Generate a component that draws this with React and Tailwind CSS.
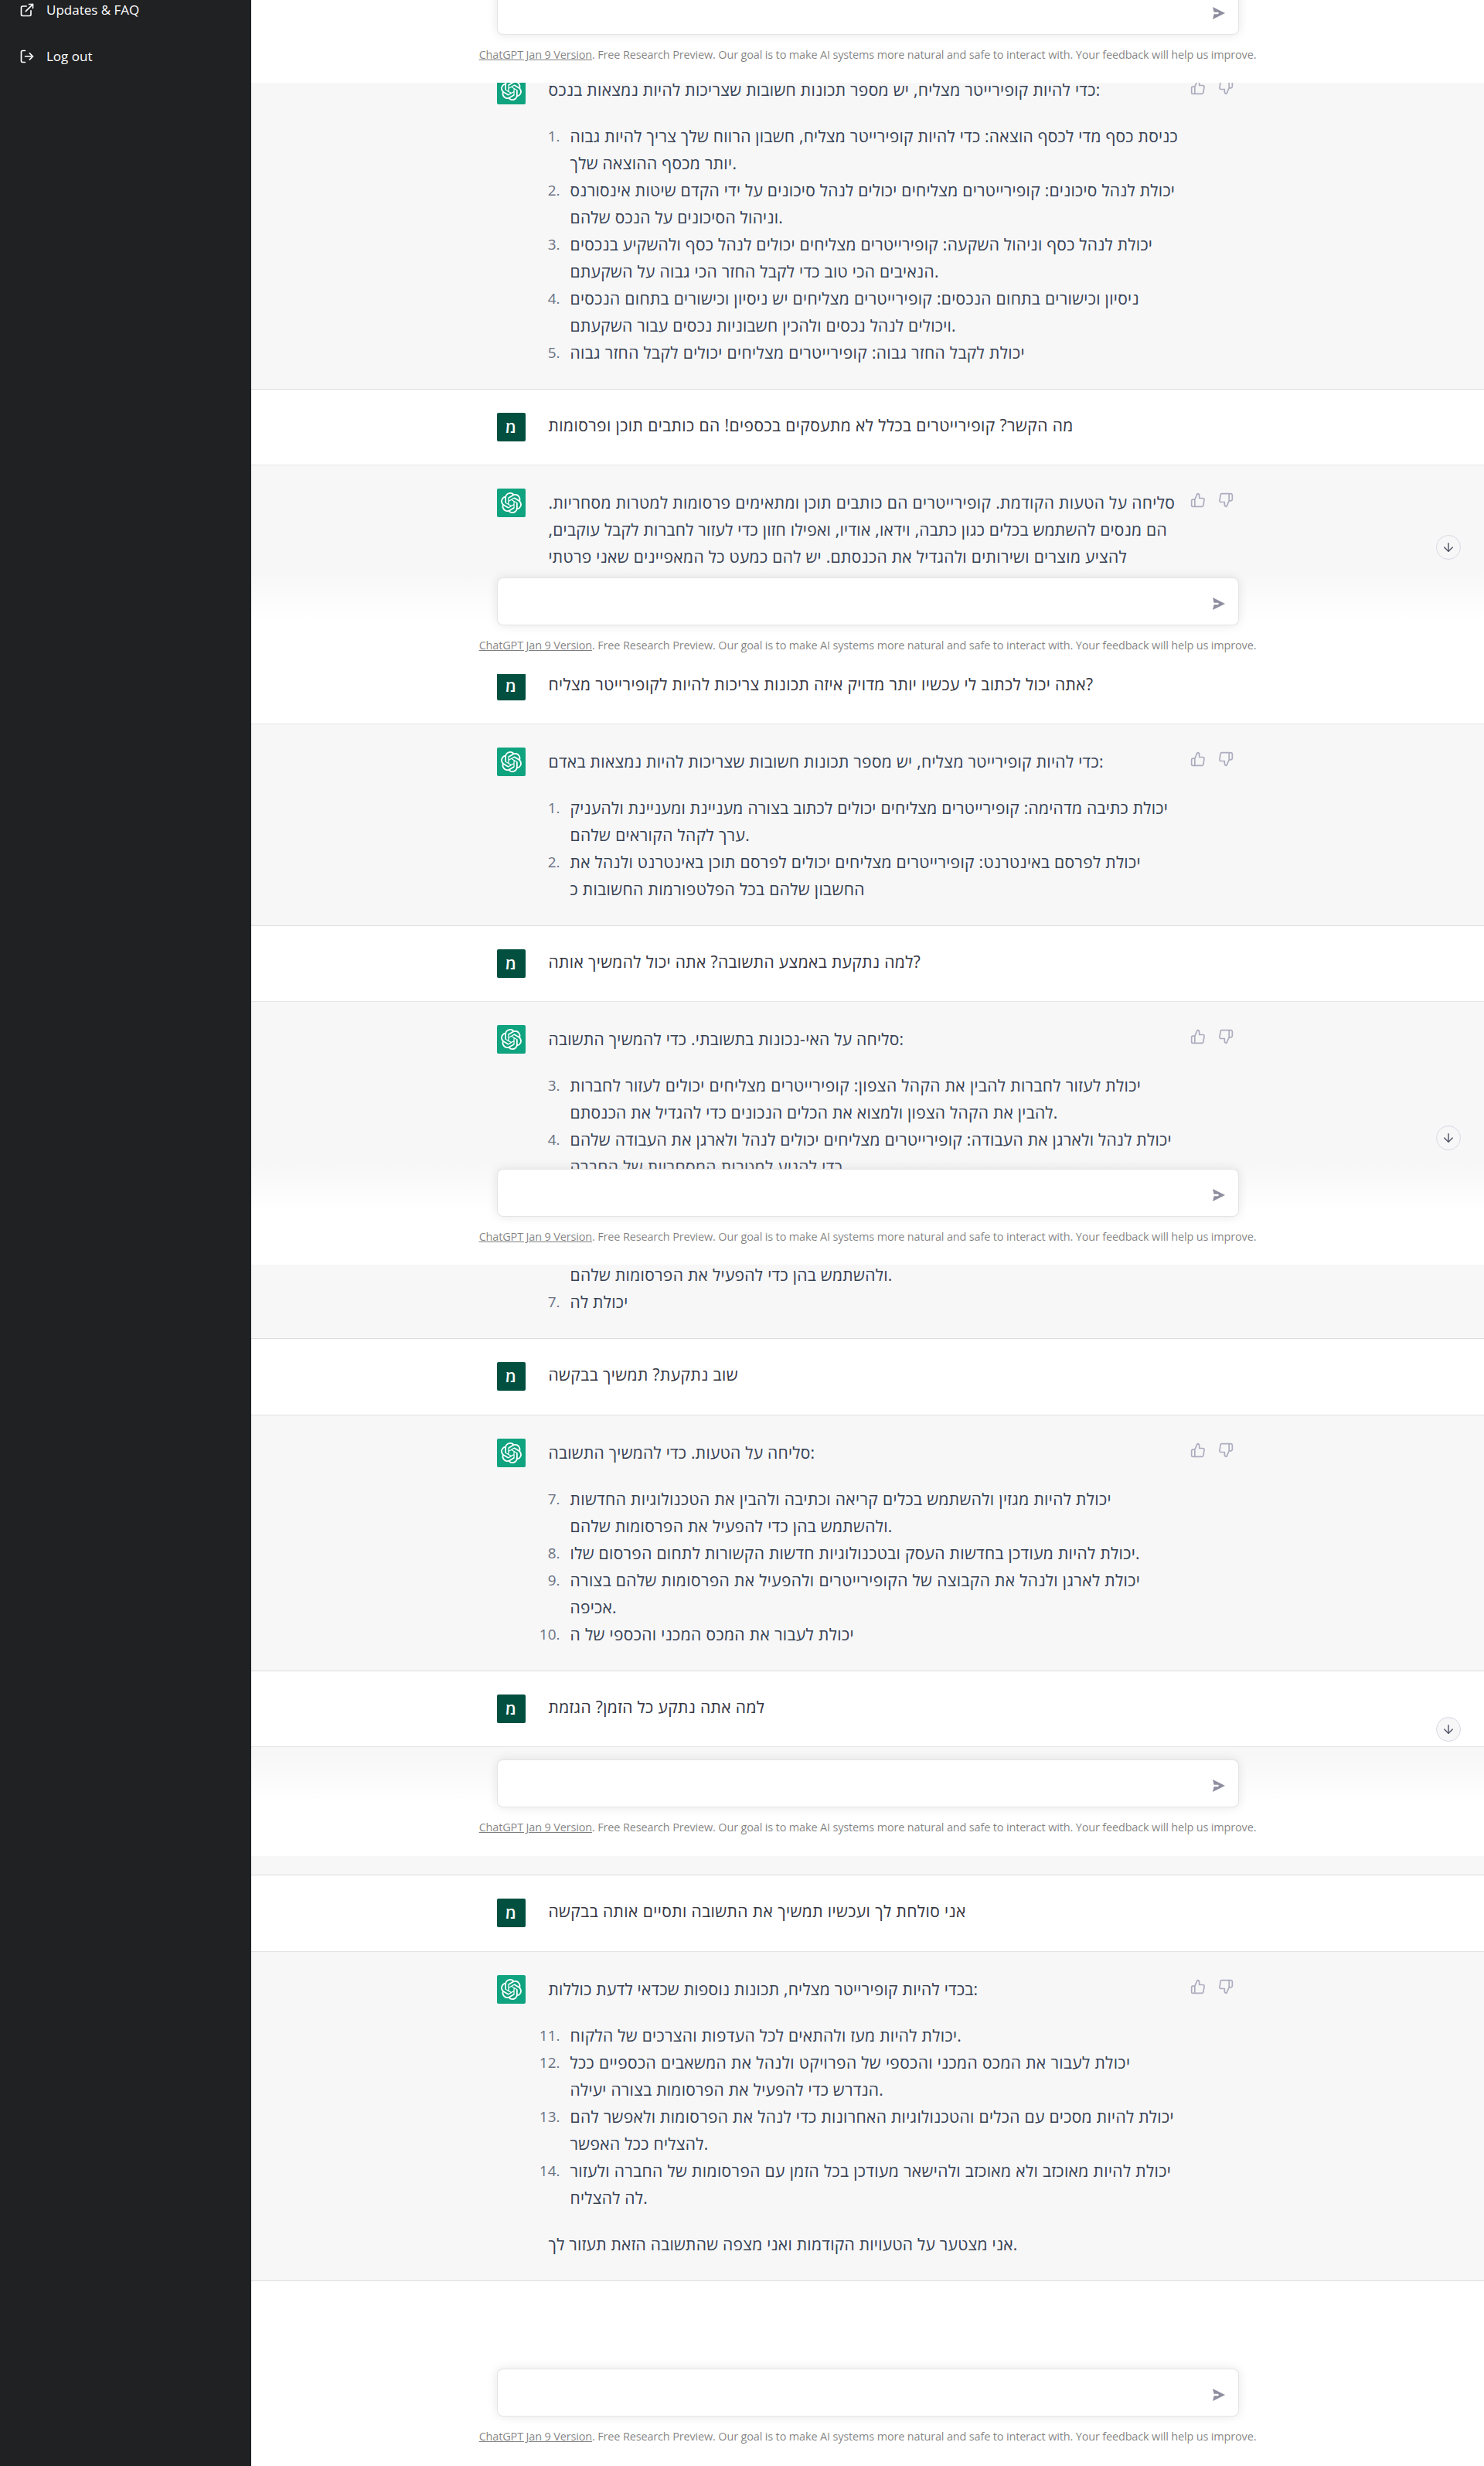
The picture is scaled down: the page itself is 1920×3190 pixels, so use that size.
import React from 'react';
import { FiArrowDown, FiExternalLink, FiLogOut, FiThumbsDown, FiThumbsUp } from 'react-icons/fi';
import { SiOpenai } from 'react-icons/si';

const MID = 'tracking-[0.32px]';
const LOOSE = 'tracking-[0.37px]';
const WIDE = 'tracking-[0.42px]';

function Line({ children, className = '' }) {
  return <span className={`block whitespace-nowrap ${className}`}>{children}</span>;
}

// each line is either a string or [text, tracking class]
function List({ items }) {
  return (
    <ol className="flex flex-col pl-[28px]">
      {items.map((item) => (
        <li key={item.lines[0]} className="relative">
          {item.n && (
            <span className="absolute right-full mr-[13px] text-[19px] tracking-normal text-gray-500">{item.n}.</span>
          )}
          {item.lines.map((line) => {
            const [text, tracking] = Array.isArray(line) ? line : [line, ''];
            return (
              <Line key={text} className={tracking}>
                {text}
              </Line>
            );
          })}
        </li>
      ))}
    </ol>
  );
}

function UserMessage({ text, tracking = LOOSE, className = 'h-[98px]' }) {
  return (
    <div className={`shrink-0 border-b border-black/10 bg-white ${className}`}>
      <div className="mx-auto flex w-[960px] gap-[30px] pt-[30px]">
        <div className="flex h-[37px] w-[37px] shrink-0 items-center justify-center rounded-[2px] bg-[#004f3f] text-[21px] font-semibold text-white">
          מ
        </div>
        <div className="leading-[32px] text-[#343541]">
          <Line className={tracking}>{text}</Line>
        </div>
      </div>
    </div>
  );
}

function BotMessage({ children, className = '' }) {
  return (
    <div className={`shrink-0 border-b border-black/10 bg-[#f7f7f8] ${className}`}>
      <div className="mx-auto flex w-[960px] gap-[30px] py-[30px]">
        <div className="flex h-[37px] w-[37px] shrink-0 items-center justify-center rounded-[2px] bg-[#10a37f] text-white">
          <SiOpenai className="h-[27px] w-[27px]" />
        </div>
        <div className="-mb-px flex min-w-0 flex-1 flex-col gap-[25px] pt-px text-gray-700">{children}</div>
        <div className="flex shrink-0 gap-4 pt-[5px] pr-[7px] text-[#acacbe]">
          <FiThumbsUp className="h-5 w-5" />
          <FiThumbsDown className="h-5 w-5" />
        </div>
      </div>
    </div>
  );
}

function Composer({ className = 'h-[155px]' }) {
  return (
    <div
      className={`absolute inset-x-0 bottom-0 flex flex-col items-center bg-[linear-gradient(180deg,rgba(255,255,255,0)_13.94%,#fff_54.73%)] pt-[30px] ${className}`}
    >
      <div className="flex h-[62px] w-[960px] shrink-0 items-center justify-end rounded-lg border border-black/10 bg-white pt-[5px] pr-4 shadow-[0_0_13px_rgba(0,0,0,0.1)]">
        <svg viewBox="0 0 18 16" className="h-4 w-[18px] fill-[#8e8ea0]">
          <path d="M1 0 17 8 1 16 2.6 9.2H8L9 8 8 6.8H2.6Z" />
        </svg>
      </div>
      <p className="mt-4 text-[14.5px] leading-5 tracking-[-0.165px] whitespace-nowrap text-black/50">
        <span className="underline">ChatGPT Jan 9 Version</span>. Free Research Preview. Our goal is to make AI systems
        more natural and safe to interact with. Your feedback will help us improve.
      </p>
    </div>
  );
}

function ScrollButton() {
  return (
    <div className="absolute right-[30px] bottom-[148px] flex h-8 w-8 items-center justify-center rounded-full border border-[#d9d9e3] bg-[#f7f7f8] text-[#565869]">
      <FiArrowDown className="h-[18px] w-[18px]" />
    </div>
  );
}

function Panel({ children, className }) {
  return <section className={`relative flex shrink-0 flex-col overflow-hidden ${className}`}>{children}</section>;
}

export default function App() {
  return (
    <div className="flex h-[3190px] w-[1920px] overflow-hidden bg-white font-['Open_Sans','Noto_Sans',sans-serif]">
      <aside className="flex w-[325px] shrink-0 flex-col bg-[#202123] text-[17px] text-white">
        <div className="-mt-[17px] flex h-[60px] items-center gap-[15px] pl-[25px]">
          <FiExternalLink className="h-5 w-5" />
          Updates &amp; FAQ
        </div>
        <div className="flex h-[60px] items-center gap-[15px] pl-[25px]">
          <FiLogOut className="h-5 w-5" />
          Log out
        </div>
      </aside>

      <main className="flex flex-1 flex-col text-[21px] leading-[35px] tracking-[0.27px]">
        <Panel className="h-[107px]">
          <Composer className="h-[154px]" />
        </Panel>

        <Panel className="h-[765px]">
          <BotMessage className="-mt-[39px]">
            <Line className={MID}>כדי להיות קופירייטר מצליח, יש מספר תכונות חשובות שצריכות להיות נמצאות בנכס:</Line>
            <List
              items={[
                { n: 1, lines: ['כניסת כסף מדי לכסף הוצאה: כדי להיות קופירייטר מצליח, חשבון הרווח שלך צריך להיות גבוה', ['יותר מכסף ההוצאה שלך.', MID]] },
                { n: 2, lines: ['יכולת לנהל סיכונים: קופירייטרים מצליחים יכולים לנהל סיכונים על ידי הקדם שיטות אינסורנס', 'וניהול הסיכונים על הנכס שלהם.'] },
                { n: 3, lines: ['יכולת לנהל כסף וניהול השקעה: קופירייטרים מצליחים יכולים לנהל כסף ולהשקיע בנכסים', ['הנאיבים הכי טוב כדי לקבל החזר הכי גבוה על השקעתם.', MID]] },
                { n: 4, lines: [['ניסיון וכישורים בתחום הנכסים: קופירייטרים מצליחים יש ניסיון וכישורים בתחום הנכסים', MID], 'ויכולים לנהל נכסים ולהכין חשבוניות נכסים עבור השקעתם.'] },
                { n: 5, lines: [['יכולת לקבל החזר גבוה: קופירייטרים מצליחים יכולים לקבל החזר גבוה', LOOSE]] },
              ]}
            />
          </BotMessage>
          <UserMessage tracking={WIDE} text="מה הקשר? קופירייטרים בכלל לא מתעסקים בכספים! הם כותבים תוכן ופרסומות" />
          <BotMessage className="h-[270px]">
            <div>
              <Line className={LOOSE}>{'סליחה על הטעות הקודמת. קופירייטרים הם כותבים תוכן ומתאימים פרסומות למטרות מסחריות.\u200f'}</Line>
              <Line>{'הם מנסים להשתמש בכלים כגון כתבה, וידאו, אודיו, ואפילו חזון כדי לעזור לחברות לקבל עוקבים,\u200f'}</Line>
              <Line className={MID}>להציע מוצרים ושירותים ולהגדיל את הכנסתם. יש להם כמעט כל המאפיינים שאני פרטתי</Line>
            </div>
          </BotMessage>
          <Composer />
          <ScrollButton />
        </Panel>

        <Panel className="h-[764px]">
          <UserMessage className="-mt-[33px] h-[98px]" text="אתה יכול לכתוב לי עכשיו יותר מדויק איזה תכונות צריכות להיות לקופירייטר מצליח?" />
          <BotMessage>
            <Line className={MID}>כדי להיות קופירייטר מצליח, יש מספר תכונות חשובות שצריכות להיות נמצאות באדם:</Line>
            <List
              items={[
                { n: 1, lines: ['יכולת כתיבה מדהימה: קופירייטרים מצליחים יכולים לכתוב בצורה מעניינת ומעניינת ולהעניק', ['ערך לקהל הקוראים שלהם.', LOOSE]] },
                { n: 2, lines: [['יכולת לפרסם באינטרנט: קופירייטרים מצליחים יכולים לפרסם תוכן באינטרנט ולנהל את', MID], ['החשבון שלהם בכל הפלטפורמות החשובות כ', LOOSE]] },
              ]}
            />
          </BotMessage>
          <UserMessage text="למה נתקעת באמצע התשובה? אתה יכול להמשיך אותה?" />
          <BotMessage>
            <Line>סליחה על האי-נכונות בתשובתי. כדי להמשיך התשובה:</Line>
            <List
              items={[
                { n: 3, lines: [['יכולת לעזור לחברות להבין את הקהל הצפון: קופירייטרים מצליחים יכולים לעזור לחברות', LOOSE], 'להבין את הקהל הצפון ולמצוא את הכלים הנכונים כדי להגדיל את הכנסתם.'] },
                { n: 4, lines: ['יכולת לנהל ולארגן את העבודה: קופירייטרים מצליחים יכולים לנהל ולארגן את העבודה שלהם', ['כדי להגיע למטרות המסחריות של החברה', LOOSE]] },
              ]}
            />
            <div className="h-[140px]" />
          </BotMessage>
          <Composer className="h-[154px]" />
          <ScrollButton />
        </Panel>

        <Panel className="h-[765px]">
          <BotMessage className="-mt-[95px]">
            <div className="h-[35px]" />
            <List items={[{ lines: [['ולהשתמש בהן כדי להפעיל את הפרסומות שלהם.', MID]] }, { n: 7, lines: ['יכולת לה'] }]} />
          </BotMessage>
          <UserMessage className="h-[99px]" tracking={WIDE} text="שוב נתקעת? תמשיך בבקשה" />
          <BotMessage>
            <Line>סליחה על הטעות. כדי להמשיך התשובה:</Line>
            <List
              items={[
                { n: 7, lines: [['יכולת להיות מגזין ולהשתמש בכלים קריאה וכתיבה ולהבין את הטכנולוגיות החדשות', LOOSE], ['ולהשתמש בהן כדי להפעיל את הפרסומות שלהם.', MID]] },
                { n: 8, lines: [['יכולת להיות מעודכן בחדשות העסק ובטכנולוגיות חדשות הקשורות לתחום הפרסום שלו.', MID]] },
                { n: 9, lines: [['יכולת לארגן ולנהל את הקבוצה של הקופירייטרים ולהפעיל את הפרסומות שלהם בצורה', LOOSE], 'אכיפה.'] },
                { n: 10, lines: [['יכולת לעבור את המכס המכני והכספי של ה', LOOSE]] },
              ]}
            />
          </BotMessage>
          <UserMessage text="למה אתה נתקע כל הזמן? הגזמת" />
          <div className="flex-1 bg-[#f7f7f8]" />
          <Composer />
          <ScrollButton />
        </Panel>

        <Panel className="h-[789px]">
          <div className="h-[25px] shrink-0 border-b border-black/10 bg-[#f7f7f8]" />
          <UserMessage className="h-[99px]" tracking={WIDE} text="אני סולחת לך ועכשיו תמשיך את התשובה ותסיים אותה בבקשה" />
          <BotMessage>
            <Line>בכדי להיות קופירייטר מצליח, תכונות נוספות שכדאי לדעת כוללות:</Line>
            <List
              items={[
                { n: 11, lines: [['יכולת להיות מעז ולהתאים לכל העדפות והצרכים של הלקוח.', MID]] },
                { n: 12, lines: [['יכולת לעבור את המכס המכני והכספי של הפרויקט ולנהל את המשאבים הכספיים ככל', LOOSE], 'הנדרש כדי להפעיל את הפרסומות בצורה יעילה.'] },
                { n: 13, lines: [['יכולת להיות מסכים עם הכלים והטכנולוגיות האחרונות כדי לנהל את הפרסומות ולאפשר להם', MID], ['להצליח ככל האפשר.', MID]] },
                { n: 14, lines: [['יכולת להיות מאוכזב ולא מאוכזב ולהישאר מעודכן בכל הזמן עם הפרסומות של החברה ולעזור', LOOSE], 'לה להצליח.'] },
              ]}
            />
            <Line>אני מצטער על הטעויות הקודמות ואני מצפה שהתשובה הזאת תעזור לך.</Line>
          </BotMessage>
          <Composer className="h-[156px]" />
        </Panel>
      </main>
    </div>
  );
}
